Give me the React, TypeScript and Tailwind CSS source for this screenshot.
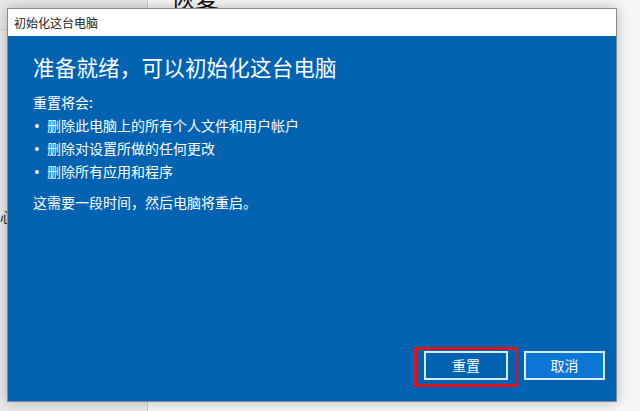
const font = { fontFamily: '"Noto Sans CJK SC", "Noto Sans", sans-serif' };

const items = ['删除此电脑上的所有个人文件和用户帐户', '删除对设置所做的任何更改', '删除所有应用和程序'];

export default function App() {
  return (
    <div className="relative w-[640px] h-[411px] overflow-hidden bg-[#f6f6f6] flex" style={font}>
      {/* Settings window behind the dialog */}
      <div className="w-[148px] h-full bg-[#e9e9e9] border-r border-[#cfcfcf] flex flex-col">
        <div className="h-[30px] border-b border-[#d2d2d2]" />
        <div className="mt-[176px] text-[14px] leading-[20px] text-[#222]">心</div>
      </div>
      <div className="flex-1 relative">
        <div className="absolute left-[23px] -top-[15px] text-[24px] leading-[24px] text-[#111]">恢复</div>
      </div>

      {/* Dialog */}
      <div className="absolute left-[7px] top-[8px] w-[610px] h-[394px] border border-[#8a8a8a] shadow-[0_0_12px_rgba(0,0,0,0.25)] flex flex-col">
        <div className="h-[27px] bg-white flex items-center pl-[6px] text-[12px] text-[#222]">初始化这台电脑</div>
        <div className="flex-1 bg-[#0063b1] text-white flex flex-col px-[25px] pt-[17px] pb-[21px]">
          <h1 className="text-[21.5px] leading-[28px] tracking-[0.2px]">准备就绪，可以初始化这台电脑</h1>
          <div className="mt-[10px] text-[14px] leading-[23px]">
            <p>重置将会:</p>
            <ul>
              {items.map((t) => (
                <li key={t} className="flex items-center">
                  <span className="w-[4px] h-[4px] rounded-full bg-white ml-[2px] mr-[8px]" />
                  {t}
                </li>
              ))}
            </ul>
            <p className="mt-[8px]">这需要一段时间，然后电脑将重启。</p>
          </div>

          <div className="mt-auto flex justify-end gap-[16px] -mr-[14px]">
            <div className="relative">
              <div className="absolute -left-[10px] -top-[4px] -right-[10px] -bottom-[7px] border-[3px] border-[#e0121c]" />
              <button className="w-[84px] h-[29px] border-2 border-[#d7ecfb] bg-[#0063b1] text-[14px] text-white">重置</button>
            </div>
            <button className="w-[81px] h-[29px] border-2 border-[#d7ecfb] bg-[#0b76d4] text-[14px] text-white">取消</button>
          </div>
        </div>
      </div>
    </div>
  );
}
